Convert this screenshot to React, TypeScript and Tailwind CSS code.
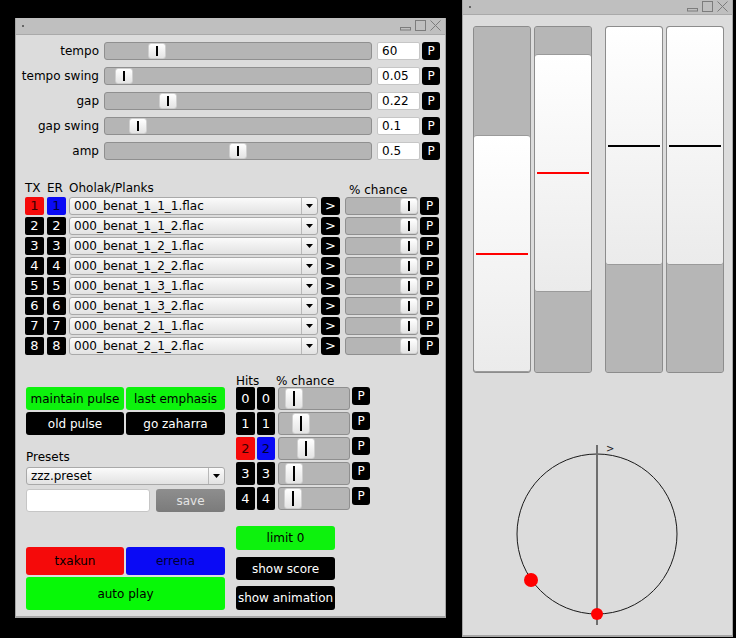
import React from "react";

const TitleButtons = () => (
  <svg width="42" height="12" viewBox="0 0 42 12" className="shrink-0">
    <rect x="0.5" y="7.5" width="10" height="2.5" fill="none" stroke="#7c7c7c" />
    <rect x="15.5" y="0.5" width="10" height="10" fill="none" stroke="#7c7c7c" />
    <path d="M30.5 0.5 L40.5 10.5 M40.5 0.5 L30.5 10.5" stroke="#7c7c7c" strokeWidth="1" />
  </svg>
);

const TitleBar = ({ h }: { h: string }) => (
  <div className={`flex items-center justify-between bg-[#bfbfbf] border-b border-[#a9a9a9] pl-[6px] pr-[3px] ${h}`}>
    <div className="w-[2px] h-[2px] bg-[#666]" />
    <TitleButtons />
  </div>
);

const Slider = ({ left, cls }: { left: number; cls: string }) => (
  <div className={`relative rounded-[3px] border border-[#8f8f8f] bg-[#b5b5b5] ${cls}`}>
    <div
      className="absolute top-0 bottom-0 w-[18px] rounded-[3px] border border-[#cfcfcf] bg-gradient-to-b from-white to-[#e4e4e4] flex items-center justify-center"
      style={{ left }}
    >
      <div className="w-[2px] h-[75%] bg-black" />
    </div>
  </div>
);

const PBtn = ({ cls = "w-[18px] h-[18px]" }: { cls?: string }) => (
  <div className={`${cls} rounded-[3px] bg-black text-white flex items-center justify-center shrink-0`}>P</div>
);

const NumBox = ({ n, color, cls }: { n: number; color?: "red" | "blue"; cls: string }) => {
  const c = color === "red" ? "bg-[#f50a0a] text-[#3a0000]" : color === "blue" ? "bg-[#0a0af5] text-[#000033]" : "bg-black text-white";
  return <div className={`rounded-[2px] flex items-center justify-center shrink-0 text-[13px] ${c} ${cls}`}>{n}</div>;
};

const Combo = ({ text, cls }: { text: string; cls: string }) => (
  <div className={`flex items-stretch rounded-[3px] border border-[#a9a9a9] bg-gradient-to-b from-[#fbfbfb] to-[#e2e2e2] ${cls}`}>
    <div className="flex-1 flex items-center pl-[4px] text-black">{text}</div>
    <div className="w-[16px] border-l border-[#b8b8b8] flex items-center justify-center">
      <svg width="7" height="4" viewBox="0 0 7 4"><path d="M0 0 H7 L3.5 4 Z" fill="#000" /></svg>
    </div>
  </div>
);

const Btn = ({ text, cls }: { text: string; cls: string }) => (
  <div className={`rounded-[3px] flex items-center justify-center shrink-0 ${cls}`}>{text}</div>
);

const sliders = [
  { label: "tempo", value: "60", left: 43 },
  { label: "tempo swing", value: "0.05", left: 10 },
  { label: "gap", value: "0.22", left: 54 },
  { label: "gap swing", value: "0.1", left: 24 },
  { label: "amp", value: "0.5", left: 124 },
];

const files = [
  "000_benat_1_1_1.flac",
  "000_benat_1_1_2.flac",
  "000_benat_1_2_1.flac",
  "000_benat_1_2_2.flac",
  "000_benat_1_3_1.flac",
  "000_benat_1_3_2.flac",
  "000_benat_2_1_1.flac",
  "000_benat_2_1_2.flac",
];

const hits = [6, 13, 18, 6, 5];

const Bar = ({ segs, line }: { segs: { h: number; fill: "gray" | "white" }[]; line: { top: number; color: string } }) => (
  <div className="relative w-[58px] h-[347px] flex flex-col rounded-[3px] border border-[#8c8c8c] overflow-hidden bg-[#b6b6b6]">
    {segs.map((s, i) => (
      <div
        key={i}
        className={s.fill === "gray" ? "bg-[#b6b6b6]" : "bg-gradient-to-b from-white to-[#ebebeb] border-y border-[#9a9a9a] first:border-t-0 last:border-b-0 rounded-[3px]"}
        style={{ height: s.h }}
      />
    ))}
    <div className="absolute left-[2px] right-[2px] h-[2px]" style={{ top: line.top, background: line.color }} />
  </div>
);

export default function App() {
  return (
    <div className="relative w-[736px] h-[638px] bg-black overflow-hidden font-['DejaVu_Sans',sans-serif] text-[12px] leading-[14px] text-black">
      {/* main window */}
      <div className="absolute left-[15px] top-[18px] w-[431px] h-[600px] flex flex-col border-x border-b-2 border-[#a6a6a6] bg-[#dcdcdc]">
        <TitleBar h="h-[17px]" />
        <div className="flex flex-col">
          {/* sliders */}
          <div className="flex flex-col gap-[7px] pt-[7px]">
            {sliders.map((s) => (
              <div key={s.label} className="flex items-stretch h-[18px]">
                <div className="w-[84px] pr-[1px] flex items-center justify-end">{s.label}</div>
                <Slider left={s.left} cls="ml-[4px] w-[268px]" />
                <div className="ml-[5px] w-[43px] rounded-[2px] border border-[#c6c6c6] bg-white flex items-center pl-[4px]">{s.value}</div>
                <div className="ml-[2px]"><PBtn /></div>
              </div>
            ))}
          </div>

          {/* planks table */}
          <div className="flex items-end h-[14px] mt-[21px] pl-[9px]">
            <div className="w-[22px]">TX</div>
            <div className="w-[22px]">ER</div>
            <div className="w-[280px]">Oholak/Planks</div>
            <div className="relative top-[2px]">% chance</div>
          </div>
          <div className="flex flex-col gap-[2px] mt-[2px] pl-[9px]">
            {files.map((f, i) => (
              <div key={f} className="flex items-stretch h-[18px]">
                <NumBox n={i + 1} color={i === 0 ? "red" : undefined} cls="w-[19px]" />
                <NumBox n={i + 1} color={i === 0 ? "blue" : undefined} cls="ml-[3px] w-[19px]" />
                <Combo text={f} cls="ml-[3px] w-[249px] text-[12px]" />
                <Btn text=">" cls="ml-[3px] w-[19px] bg-black text-white text-[13px]" />
                <Slider left={54} cls="ml-[5px] w-[73px]" />
                <div className="ml-[2px]"><PBtn cls="h-[18px] w-[19px]" /></div>
              </div>
            ))}
          </div>

          {/* bottom */}
          <div className="flex mt-[18px] pl-[10px]">
            <div className="w-[199px] flex flex-col pt-[14px]">
              <div className="flex gap-[2px]">
                <Btn text="maintain pulse" cls="w-[98px] h-[23px] bg-[#0df20d]" />
                <Btn text="last emphasis" cls="w-[99px] h-[23px] bg-[#0df20d]" />
              </div>
              <div className="flex gap-[2px] mt-[2px]">
                <Btn text="old pulse" cls="w-[98px] h-[23px] bg-black text-white" />
                <Btn text="go zaharra" cls="w-[99px] h-[23px] bg-black text-white" />
              </div>
              <div className="mt-[15px] h-[14px]">Presets</div>
              <Combo text="zzz.preset" cls="mt-[3px] h-[18px]" />
              <div className="flex mt-[4px] gap-[6px]">
                <div className="w-[124px] h-[23px] rounded-[3px] border border-[#c6c6c6] bg-white" />
                <Btn text="save" cls="w-[69px] h-[23px] bg-gradient-to-b from-[#8e8e8e] to-[#7b7b7b] text-[#e4e4e4]" />
              </div>
              <div className="flex gap-[2px] mt-[35px]">
                <Btn text="txakun" cls="w-[98px] h-[28px] bg-[#f50a0a]" />
                <Btn text="errena" cls="w-[99px] h-[28px] bg-[#0a0af5] text-[#000033]" />
              </div>
              <Btn text="auto play" cls="mt-[2px] h-[33px] bg-[#07f807]" />
            </div>

            <div className="ml-[11px] flex flex-col">
              <div className="flex h-[14px] relative top-[1px]">
                <div className="w-[40px]">Hits</div>
                <div>% chance</div>
              </div>
              <div className="flex flex-col gap-[2px]">
                {hits.map((l, i) => (
                  <div key={i} className="flex items-start h-[23px]">
                    <NumBox n={i} color={i === 2 ? "red" : undefined} cls="w-[19px] h-[23px]" />
                    <NumBox n={i} color={i === 2 ? "blue" : undefined} cls="ml-[2px] w-[18px] h-[23px]" />
                    <Slider left={l} cls="ml-[3px] w-[72px] h-[23px]" />
                    <div className="ml-[2px]"><PBtn /></div>
                  </div>
                ))}
              </div>
              <Btn text="limit 0" cls="mt-[16px] w-[99px] h-[24px] bg-[#0df20d]" />
              <Btn text="show score" cls="mt-[7px] w-[99px] h-[23px] bg-black text-white" />
              <Btn text="show animation" cls="mt-[6px] w-[99px] h-[24px] bg-black text-white" />
            </div>
          </div>
        </div>
      </div>

      {/* animation window */}
      <div className="absolute left-[462px] top-0 w-[271px] h-[637px] flex flex-col border-x border-b-2 border-[#a6a6a6] bg-[#dcdcdc]">
        <TitleBar h="h-[15px]" />
        <div className="flex pt-[11px] pl-[10px]">
          <Bar segs={[{ h: 108, fill: "gray" }, { h: 237, fill: "white" }]} line={{ top: 226, color: "#f00" }} />
          <div className="ml-[3px]">
            <Bar segs={[{ h: 27, fill: "gray" }, { h: 238, fill: "white" }, { h: 80, fill: "gray" }]} line={{ top: 145, color: "#f00" }} />
          </div>
          <div className="ml-[13px]">
            <Bar segs={[{ h: 238, fill: "white" }, { h: 107, fill: "gray" }]} line={{ top: 118, color: "#000" }} />
          </div>
          <div className="ml-[3px]">
            <Bar segs={[{ h: 238, fill: "white" }, { h: 107, fill: "gray" }]} line={{ top: 118, color: "#000" }} />
          </div>
        </div>
        <svg width="269" height="260" viewBox="0 0 269 260" className="block">
          <circle cx="134" cy="161" r="80" fill="none" stroke="#1a1a1a" strokeWidth="1" />
          <line x1="134" y1="72" x2="134" y2="252" stroke="#6e6e6e" strokeWidth="2" />
          <text x="143" y="79" fontSize="10" fill="#222" fontFamily="DejaVu Sans, sans-serif">&gt;</text>
          <circle cx="68" cy="207" r="7" fill="#f00" />
          <circle cx="134" cy="241" r="6" fill="#f00" />
        </svg>
      </div>
    </div>
  );
}
